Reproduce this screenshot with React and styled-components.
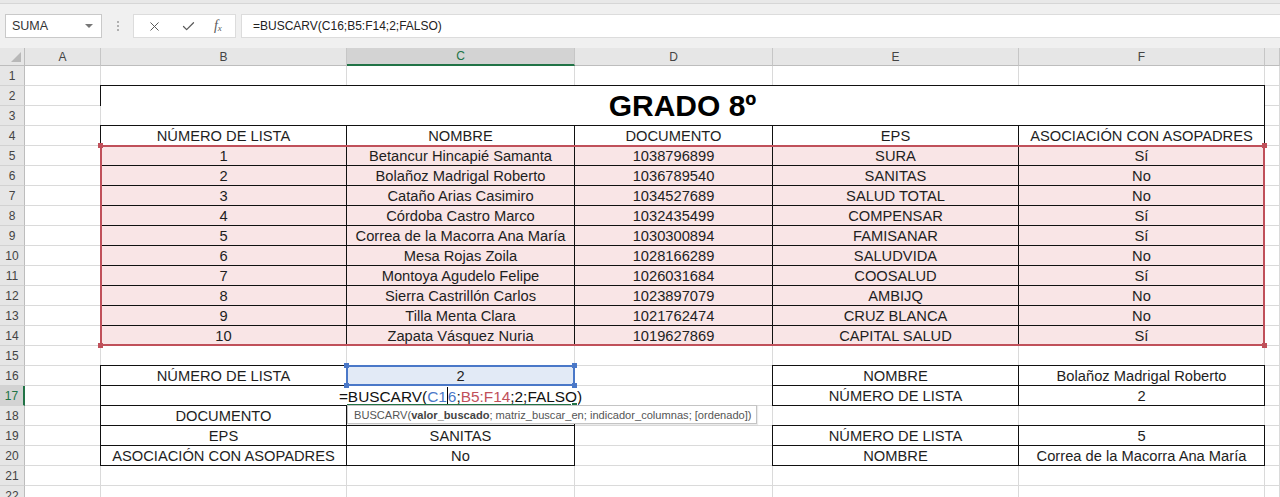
import React from 'react';
import styled, { createGlobalStyle, css } from 'styled-components';
import { X, Check } from 'lucide-react';

const GlobalStyle = createGlobalStyle`
  html, body { margin: 0; padding: 0; background: #fff; overflow: hidden; }
  body { font-family: "Liberation Sans", Arial, sans-serif; }
`;

const COLS = ['A', 'B', 'C', 'D', 'E', 'F', 'G'];
const WIDTHS = [76, 246, 228, 198, 246, 246, 15];
const HEAD_W = 25;
const HEAD_H = 18;
const ROW_H = 20;
const ROW_COUNT = 22;
const PINK = '#f9e5e6';
const BLUE_FILL = '#e2eaf6';
const RED = '#c0505a';
const BLUE = '#4a78c8';
const GREEN = '#217346';

const colLeft = (i) => HEAD_W + WIDTHS.slice(0, i).reduce((a, b) => a + b, 0);
const rowTop = (r) => HEAD_H + (r - 1) * ROW_H;
const rangeRect = (c1, r1, c2, r2) => ({
  left: colLeft(c1) - 1,
  top: rowTop(r1) - 1,
  width: colLeft(c2 + 1) - colLeft(c1) + 1,
  height: rowTop(r2 + 1) - rowTop(r1) + 1,
});

const STUDENTS = [
  ['1', 'Betancur Hincapié Samanta', '1038796899', 'SURA', 'Sí'],
  ['2', 'Bolañoz Madrigal Roberto', '1036789540', 'SANITAS', 'No'],
  ['3', 'Cataño Arias Casimiro', '1034527689', 'SALUD TOTAL', 'No'],
  ['4', 'Córdoba Castro Marco', '1032435499', 'COMPENSAR', 'Sí'],
  ['5', 'Correa de la Macorra Ana María', '1030300894', 'FAMISANAR', 'Sí'],
  ['6', 'Mesa Rojas Zoila', '1028166289', 'SALUDVIDA', 'No'],
  ['7', 'Montoya Agudelo Felipe', '1026031684', 'COOSALUD', 'Sí'],
  ['8', 'Sierra Castrillón Carlos', '1023897079', 'AMBIJQ', 'No'],
  ['9', 'Tilla Menta Clara', '1021762474', 'CRUZ BLANCA', 'No'],
  ['10', 'Zapata Vásquez Nuria', '1019627869', 'CAPITAL SALUD', 'Sí'],
];

const HEADERS = ['NÚMERO DE LISTA', 'NOMBRE', 'DOCUMENTO', 'EPS', 'ASOCIACIÓN CON ASOPADRES'];

const Window = styled.div`
  width: 1280px;
  height: 497px;
  overflow: hidden;
  display: flex;
  flex-direction: column;
  background: #fff;

  & > * {
    flex-shrink: 0;
  }
`;

const RibbonEdge = styled.div`
  height: 3px;
  background: #e8e8e8;
  border-bottom: 1px solid #d6d6d6;
`;

const FormulaBar = styled.div`
  height: 44px;
  box-sizing: border-box;
  background: #f0f0f0;
  display: flex;
  align-items: center;
  padding-left: 5px;
`;

const NameBox = styled.div`
  box-sizing: border-box;
  width: 97px;
  height: 24px;
  background: #fff;
  border: 1px solid #c9c9c9;
  display: flex;
  align-items: center;
  justify-content: space-between;
  padding: 0 6px 0 6px;
  font-size: 12.5px;
  color: #333;
`;

const Arrow = styled.span`
  width: 0;
  height: 0;
  border-left: 4px solid transparent;
  border-right: 4px solid transparent;
  border-top: 4px solid #777;
  margin-right: 2px;
`;

const Dots = styled.div`
  width: 31px;
  display: flex;
  flex-direction: column;
  align-items: center;
  gap: 2px;
`;

const Dot = styled.span`
  width: 2px;
  height: 2px;
  background: #b0b0b0;
`;

const FxBox = styled.div`
  box-sizing: border-box;
  width: 103px;
  height: 24px;
  background: #fff;
  border: 1px solid #dcdcdc;
  display: flex;
  align-items: center;
  justify-content: space-around;
  padding: 0 4px;
  color: #5a5a5a;
  margin-right: 5px;
`;

const Fx = styled.span`
  font-family: "Liberation Serif", "Times New Roman", serif;
  font-style: italic;
  font-size: 14px;
  color: #5a5a5a;

  sub {
    font-size: 9px;
    vertical-align: -1px;
  }
`;

const FormulaInput = styled.div`
  flex: 1;
  height: 24px;
  box-sizing: border-box;
  background: #fff;
  border: 1px solid #dcdcdc;
  border-right: none;
  display: flex;
  align-items: center;
  padding-left: 11px;
  font-size: 12px;
  color: #222;
`;

const Sheet = styled.div`
  position: relative;
  display: grid;
  grid-template-columns: ${HEAD_W}px ${WIDTHS.slice(0, 6).map((w) => `${w}px`).join(' ')} 1fr;
  grid-template-rows: ${HEAD_H}px repeat(${ROW_COUNT}, ${ROW_H}px);
  background: #fff;
`;

const Corner = styled.div`
  position: relative;
  box-sizing: border-box;
  background: #e6e6e6;
  border-right: 1px solid #bdbdbd;
  border-bottom: 1px solid #bdbdbd;

  &::after {
    content: '';
    position: absolute;
    right: 3px;
    bottom: 3px;
    border-style: solid;
    border-width: 0 0 10px 10px;
    border-color: transparent transparent #b8b8b8 transparent;
  }
`;

const ColHeader = styled.div`
  box-sizing: border-box;
  background: ${(p) => (p.$active ? '#d3d3d3' : '#e6e6e6')};
  border-right: 1px solid #c6c6c6;
  border-bottom: ${(p) => (p.$active ? `2px solid ${GREEN}` : '1px solid #bdbdbd')};
  display: flex;
  align-items: center;
  justify-content: center;
  font-size: 12px;
  color: ${(p) => (p.$active ? GREEN : '#444')};
`;

const RowHeader = styled.div`
  box-sizing: border-box;
  background: ${(p) => (p.$active ? '#d3d3d3' : '#e6e6e6')};
  border-right: ${(p) => (p.$active ? `2px solid ${GREEN}` : '1px solid #bdbdbd')};
  border-bottom: 1px solid #d2d2d2;
  display: flex;
  align-items: center;
  justify-content: center;
  font-size: 12px;
  color: ${(p) => (p.$active ? GREEN : '#444')};
`;

const Cell = styled.div`
  position: relative;
  box-sizing: border-box;
  grid-column: ${(p) => p.$col} / span ${(p) => p.$colSpan || 1};
  grid-row: ${(p) => p.$row} / span ${(p) => p.$rowSpan || 1};
  background: ${(p) => p.$fill || 'transparent'};
  border-right: 1px solid ${(p) => p.$fill || '#dadada'};
  border-bottom: 1px solid ${(p) => p.$fill || '#dadada'};
  display: flex;
  align-items: center;
  justify-content: center;
  padding-top: 1px;
  white-space: nowrap;
  font-size: ${(p) => p.$size || 14.7}px;
  font-weight: ${(p) => (p.$bold ? 700 : 400)};
  color: ${(p) => (p.$bold ? '#000' : '#1e1e1e')};

  ${(p) =>
    p.$boxed &&
    css`
      &::after {
        content: '';
        position: absolute;
        top: -1px;
        left: -1px;
        right: -1px;
        bottom: -1px;
        border: 1px solid #111;
        pointer-events: none;
      }
    `}
`;

const EditText = styled.span`
  background: #fff;
  padding: 0 3px;
  line-height: 18px;
  font-size: 15.4px;
  color: #111;
`;

const Ref = styled.span`
  color: ${(p) => p.$color};
`;

const Caret = styled.span`
  display: inline-block;
  width: 0;
  height: 19px;
  border-left: 1px solid #000;
  vertical-align: -4px;
`;

const RangeBox = styled.div`
  position: absolute;
  box-sizing: border-box;
  border: 2px solid ${(p) => p.$color};
  pointer-events: none;
`;

const Handle = styled.span`
  position: absolute;
  width: 5px;
  height: 5px;
  background: ${(p) => p.$color};
  ${(p) => p.$v}: -4px;
  ${(p) => p.$h}: -4px;
`;

const ActiveLine = styled.div`
  position: absolute;
  height: 2px;
  background: ${GREEN};
`;

const ActiveHandle = styled.span`
  position: absolute;
  right: -3px;
  top: -2px;
  width: 5px;
  height: 5px;
  background: ${GREEN};
  border: 1px solid #fff;
`;

const Tooltip = styled.div`
  position: absolute;
  box-sizing: border-box;
  height: 19px;
  background: #fff;
  border: 1px solid #c4c4c4;
  box-shadow: 1px 1px 1px rgba(0, 0, 0, 0.08);
  padding: 0 6px;
  display: flex;
  align-items: center;
  font-size: 11.1px;
  color: #555;
  white-space: nowrap;

  b {
    font-weight: 700;
    color: #444;
  }
`;

function Range({ rect, color }) {
  return (
    <RangeBox $color={color} style={rect}>
      <Handle $color={color} $v="top" $h="left" />
      <Handle $color={color} $v="top" $h="right" />
      <Handle $color={color} $v="bottom" $h="left" />
      <Handle $color={color} $v="bottom" $h="right" />
    </RangeBox>
  );
}

function buildCells() {
  const map = {};
  const set = (ref, value, extra = {}) => {
    map[ref] = { value, boxed: true, ...extra };
  };

  set('B2', 'GRADO 8º', { colSpan: 5, rowSpan: 2, bold: true, size: 30 });
  HEADERS.forEach((h, i) => set(COLS[i + 1] + 4, h));
  STUDENTS.forEach((row, i) =>
    row.forEach((v, j) => set(COLS[j + 1] + (5 + i), v, { fill: PINK }))
  );

  set('B16', 'NÚMERO DE LISTA');
  set('C16', '2', { fill: BLUE_FILL });
  set('B17', '');
  set('C17', (
    <EditText>
      =BUSCARV(<Ref $color={BLUE}>C1</Ref>
      <Caret />
      <Ref $color={BLUE}>6</Ref>;<Ref $color={RED}>B5:F14</Ref>;2;FALSO)
    </EditText>
  ), { boxed: false });
  set('B18', 'DOCUMENTO');
  set('C18', '');
  set('B19', 'EPS');
  set('C19', 'SANITAS');
  set('B20', 'ASOCIACIÓN CON ASOPADRES');
  set('C20', 'No');

  set('E16', 'NOMBRE');
  set('F16', 'Bolañoz Madrigal Roberto');
  set('E17', 'NÚMERO DE LISTA');
  set('F17', '2');
  set('E19', 'NÚMERO DE LISTA');
  set('F19', '5');
  set('E20', 'NOMBRE');
  set('F20', 'Correa de la Macorra Ana María');
  return map;
}

const isMerged = (c, r) => r >= 2 && r <= 3 && c >= 1 && c <= 5 && !(c === 1 && r === 2);

export default function App() {
  const cells = buildCells();
  const rows = [];

  for (let r = 1; r <= ROW_COUNT; r++) {
    rows.push(
      <RowHeader key={`h${r}`} $active={r === 17} style={{ gridRow: r + 1, gridColumn: 1 }}>
        {r}
      </RowHeader>
    );
    COLS.forEach((col, c) => {
      if (isMerged(c, r)) return;
      const data = cells[`${col}${r}`];
      rows.push(
        <Cell
          key={`${col}${r}`}
          $col={c + 2}
          $row={r + 1}
          $colSpan={data?.colSpan}
          $rowSpan={data?.rowSpan}
          $boxed={data?.boxed}
          $fill={data?.fill}
          $bold={data?.bold}
          $size={data?.size}
        >
          {data?.value}
        </Cell>
      );
    });
  }

  const active = rangeRect(2, 17, 2, 17);

  return (
    <Window>
      <GlobalStyle />
      <RibbonEdge />
      <FormulaBar>
        <NameBox>
          SUMA
          <Arrow />
        </NameBox>
        <Dots>
          <Dot />
          <Dot />
          <Dot />
        </Dots>
        <FxBox>
          <X size={15} strokeWidth={1.6} />
          <Check size={15} strokeWidth={2} />
          <Fx>
            f<sub>x</sub>
          </Fx>
        </FxBox>
        <FormulaInput>=BUSCARV(C16;B5:F14;2;FALSO)</FormulaInput>
      </FormulaBar>

      <Sheet>
        <Corner />
        {COLS.map((col, i) => (
          <ColHeader key={col} $active={col === 'C'}>
            {i < 6 ? col : ''}
          </ColHeader>
        ))}
        {rows}

        <Range rect={rangeRect(1, 5, 5, 14)} color={RED} />
        <Range rect={rangeRect(2, 16, 2, 16)} color={BLUE} />
        <ActiveLine style={{ left: active.left + 1, top: active.top + active.height - 2, width: active.width - 1 }}>
          <ActiveHandle />
        </ActiveLine>
        <Tooltip style={{ left: colLeft(2), top: rowTop(18) - 1, width: 410 }}>
          BUSCARV(<b>valor_buscado</b>; matriz_buscar_en; indicador_columnas; [ordenado])
        </Tooltip>
      </Sheet>
    </Window>
  );
}
